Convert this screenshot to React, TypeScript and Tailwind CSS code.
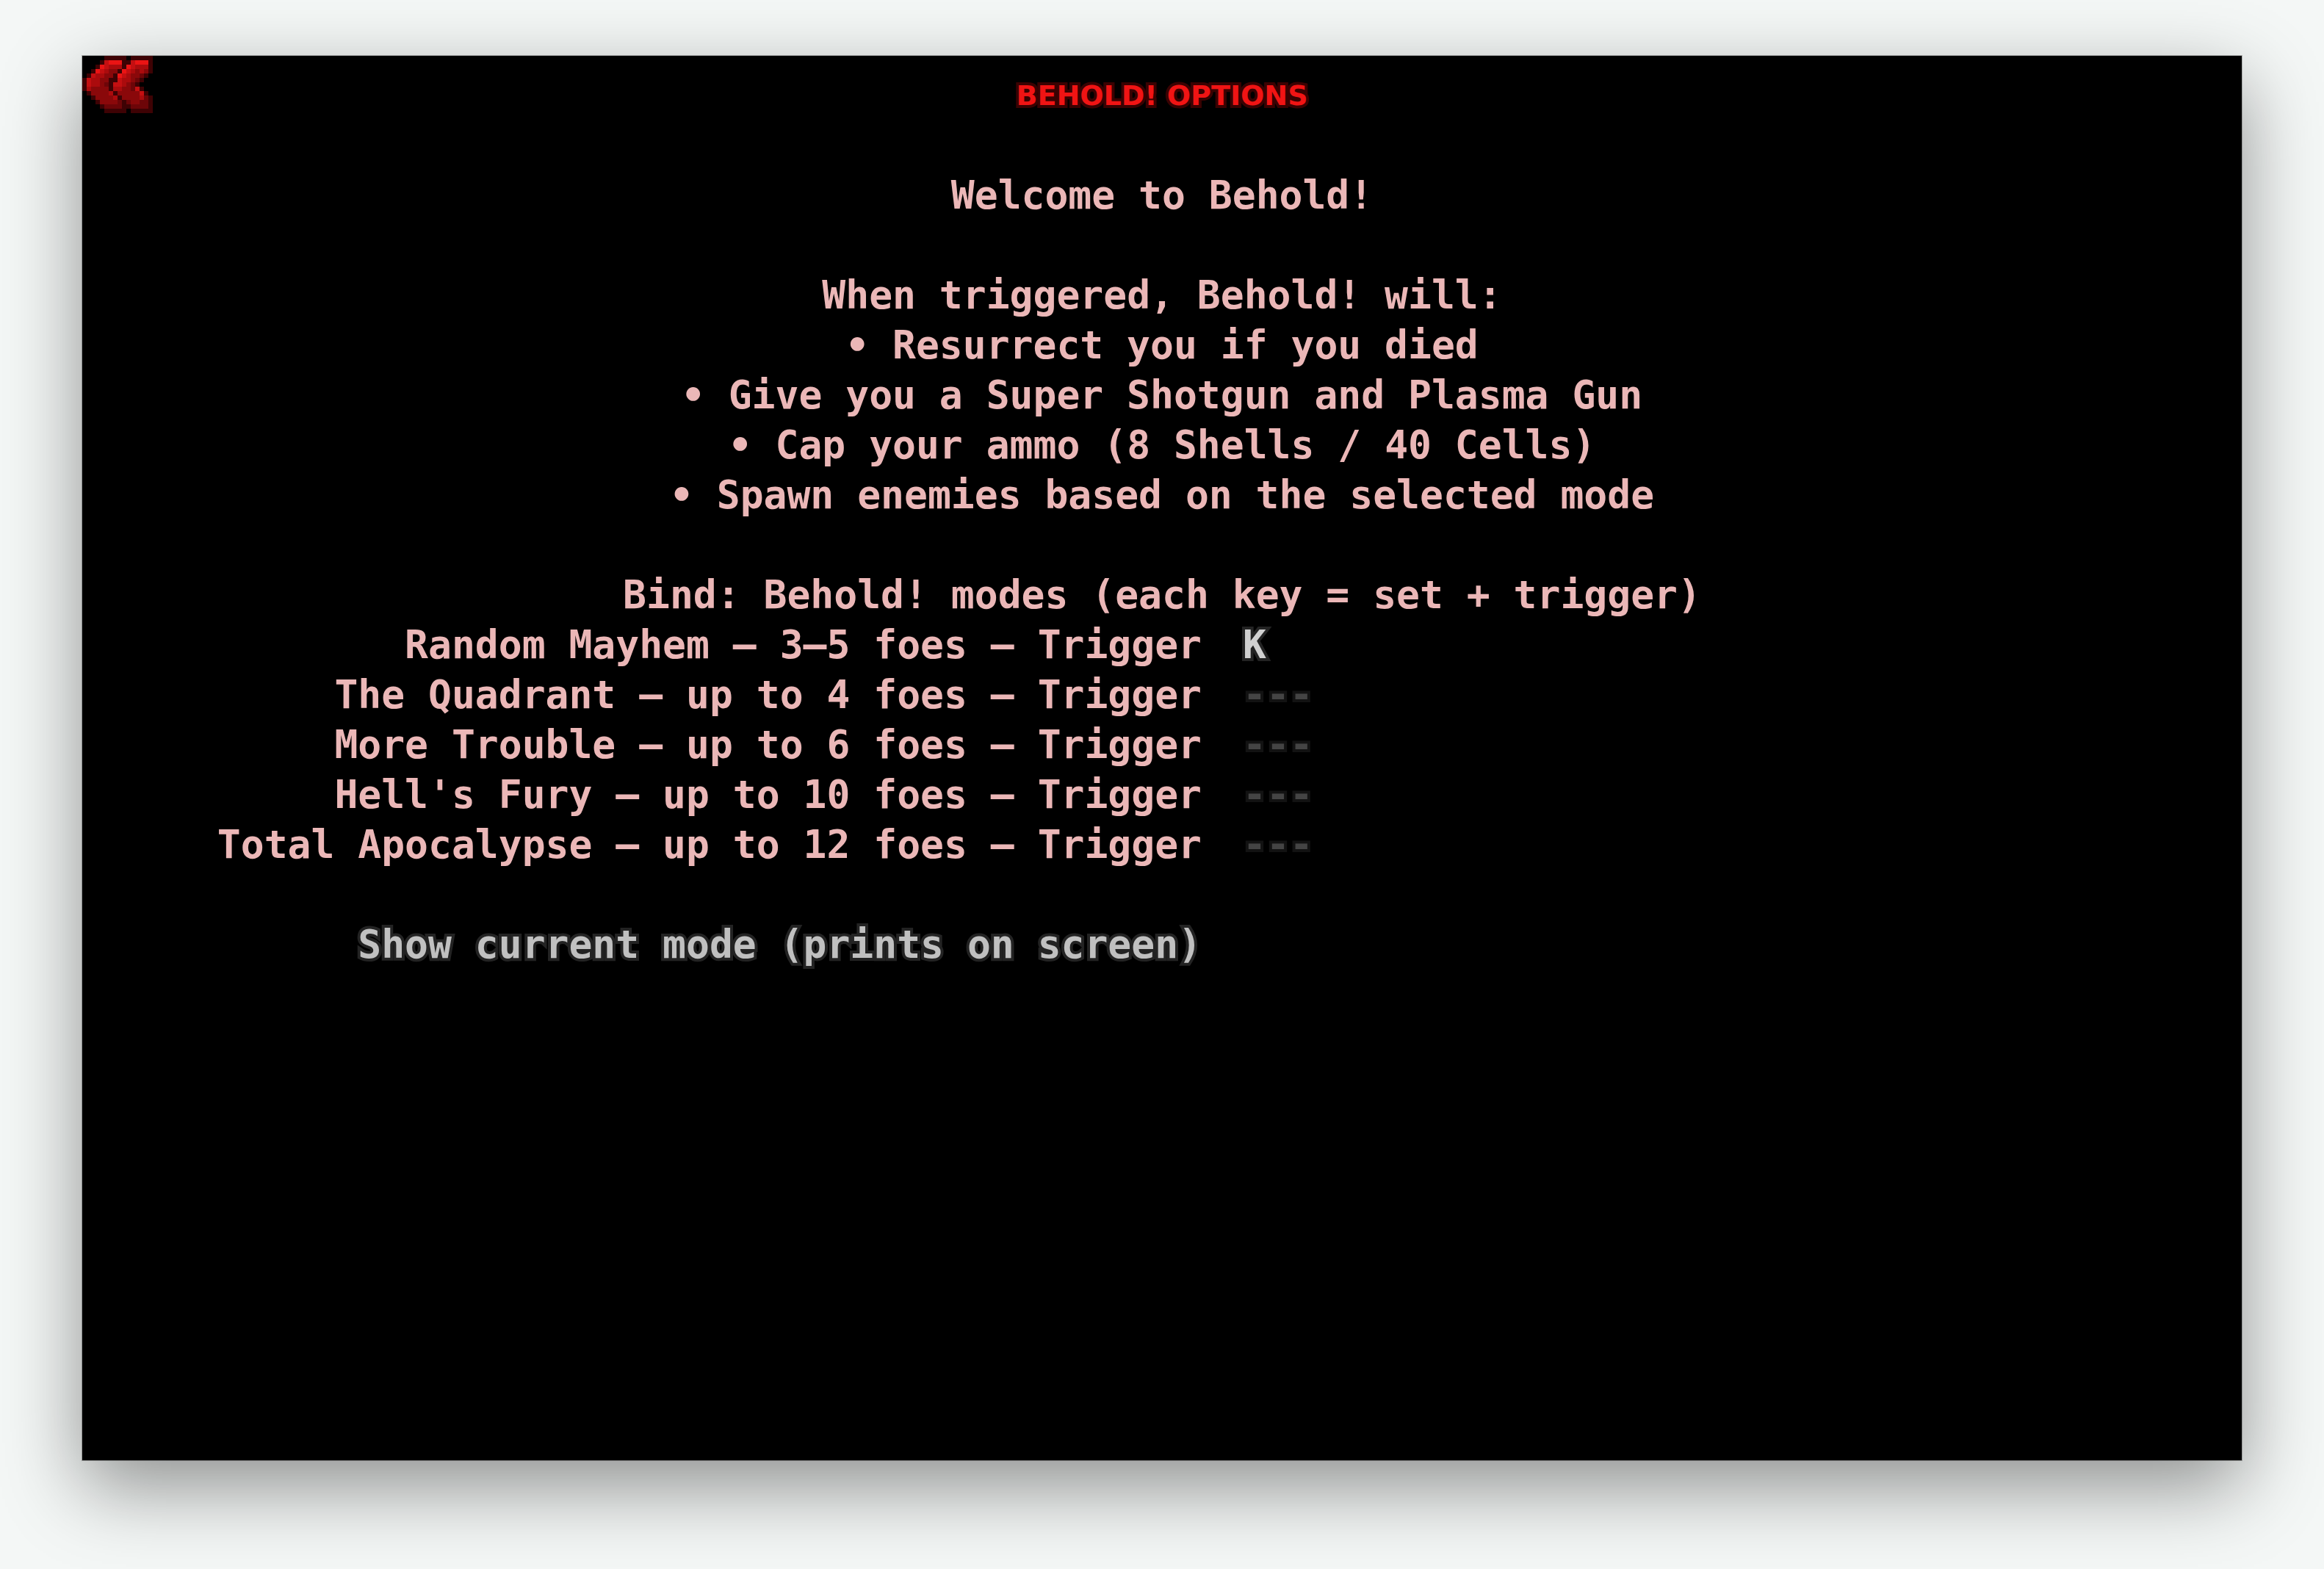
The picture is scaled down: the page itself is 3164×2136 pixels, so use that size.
const palette: Record<string, string> = {
  a: "#3e0204",
  b: "#6d0508",
  c: "#8a080a",
  d: "#ab0b0d",
  e: "#c40f11",
  f: "#ea1414",
};

const arrowRows = [
  ".....aaaaa.aaaaa",
  "....aefffaaefffa",
  "...afedddafeddda",
  "..afedccafedcdca",
  ".aeddccafedccba.",
  "aeddccaaeddcba..",
  "aeddcbaeedcba...",
  "adccccaddccbea..",
  ".accccdacccccea.",
  "..accccdaccccdba",
  "...accccbabccbba",
  "....abbbbaabbbba",
  ".....aaaaa.aaaaa",
];

function BackIcon() {
  return (
    <svg viewBox="0 0 16 13" className="w-24 h-[78px]" shapeRendering="crispEdges" aria-hidden="true">
      {arrowRows.flatMap((row, y) =>
        row.split("").map((c, x) =>
          c === "." ? null : <rect key={`${x}-${y}`} x={x} y={y} width="1" height="1" fill={palette[c]} />,
        ),
      )}
    </svg>
  );
}

const intro = [
  "When triggered, Behold! will:",
  "• Resurrect you if you died",
  "• Give you a Super Shotgun and Plasma Gun",
  "• Cap your ammo (8 Shells / 40 Cells)",
  "• Spawn enemies based on the selected mode",
];

const modes = [
  { label: "Random Mayhem — 3–5 foes — Trigger", bind: "K" },
  { label: "The Quadrant — up to 4 foes — Trigger", bind: "" },
  { label: "More Trouble — up to 6 foes — Trigger", bind: "" },
  { label: "Hell's Fury — up to 10 foes — Trigger", bind: "" },
  { label: "Total Apocalypse — up to 12 foes — Trigger", bind: "" },
];

export default function App() {
  return (
    <div className="min-h-screen bg-[#f4f7f6] flex px-28 pt-[76px] pb-[148px]">
      <main className="relative flex-1 bg-black pt-6 text-[#ebb7b7] font-bold text-[53px] leading-[68px] font-['DejaVu_Sans_Mono',monospace] shadow-[0_0_0_1px_rgba(0,0,0,0.25),0_36px_100px_rgba(0,0,0,0.42)]">
        <button type="button" aria-label="Back" className="absolute left-0 top-0 block">
          <BackIcon />
        </button>
        <h1 className="text-center text-[38px] leading-[60px] text-[#f01414] font-['DejaVu_Sans',sans-serif] [-webkit-text-stroke:8px_#3a0202] [paint-order:stroke_fill]">
          BEHOLD! OPTIONS
        </h1>
        <section className="mt-[72px] text-center">
          <p className="mb-[68px]">Welcome to Behold!</p>
          {intro.map((line) => (
            <p key={line}>{line}</p>
          ))}
        </section>
        <section className="mt-[68px]">
          <h2 className="text-center">Bind: Behold! modes (each key = set + trigger)</h2>
          {modes.map((mode, i) => (
            <div key={mode.label} className="grid grid-cols-[calc(50%+54px)_1fr]">
              <label htmlFor={`bind-${i}`} className="text-right">
                {mode.label}
              </label>
              <button
                type="button"
                id={`bind-${i}`}
                className={
                  mode.bind
                    ? "ml-14 text-left text-[#d0d0d0] [-webkit-text-stroke:8px_#232323] [paint-order:stroke_fill]"
                    : "ml-14 text-left text-[#444444] [-webkit-text-stroke:8px_#121212] [paint-order:stroke_fill]"
                }
              >
                {mode.bind || "---"}
              </button>
            </div>
          ))}
        </section>
        <div className="mt-[68px] grid grid-cols-[calc(50%+54px)_1fr]">
          <button
            type="button"
            className="text-right text-[#c0c0c0] [-webkit-text-stroke:8px_#232323] [paint-order:stroke_fill]"
          >
            Show current mode (prints on screen)
          </button>
        </div>
      </main>
    </div>
  );
}
